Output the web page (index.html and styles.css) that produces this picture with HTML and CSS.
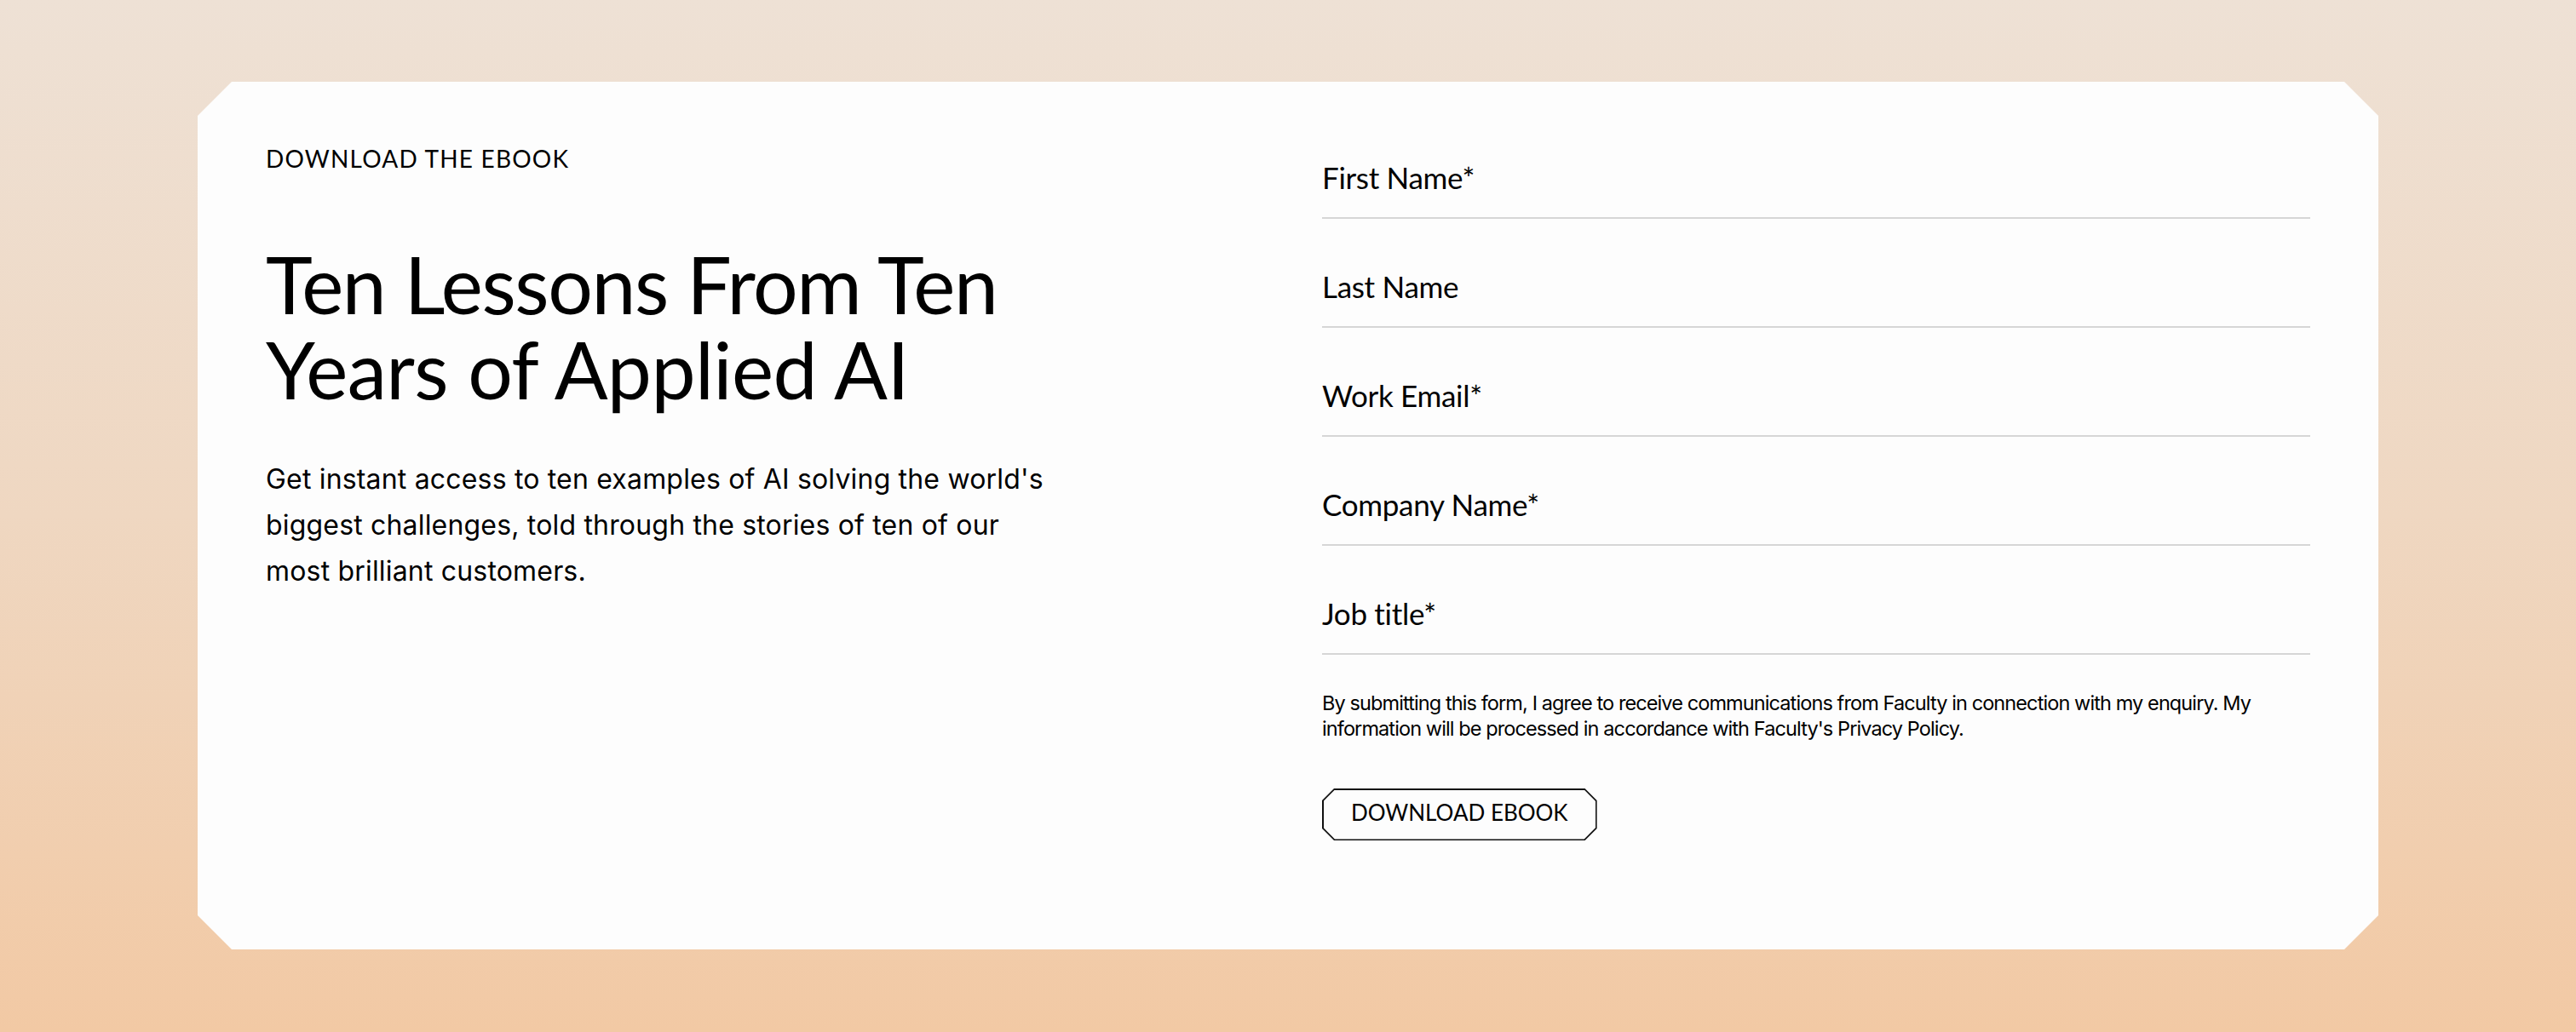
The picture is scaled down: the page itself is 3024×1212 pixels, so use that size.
FILE: index.html
```html
<!DOCTYPE html>
<html lang="en">
<head>
<meta charset="utf-8">
<title>Download the ebook</title>
<link rel="stylesheet" href="styles.css">
</head>
<body>
<main class="page">
  <section class="card">
    <div class="intro">
      <p class="eyebrow">DOWNLOAD THE EBOOK</p>
      <h1 class="title"><span class="title-line">Ten Lessons From Ten</span><span class="title-line">Years of Applied AI</span></h1>
      <p class="lead">Get instant access to ten examples of AI solving the world's biggest challenges, told through the stories of ten of our most brilliant customers.</p>
    </div>
    <form class="form" onsubmit="return false;">
      <div class="fields">
        <label class="field"><span class="field-label">First Name*</span></label>
        <label class="field"><span class="field-label">Last Name</span></label>
        <label class="field"><span class="field-label">Work Email*</span></label>
        <label class="field"><span class="field-label">Company Name*</span></label>
        <label class="field"><span class="field-label">Job title*</span></label>
      </div>
      <p class="consent">By submitting this form, I agree to receive communications from Faculty in connection with my enquiry. My information will be processed in accordance with Faculty's Privacy Policy.</p>
      <button class="submit" type="submit"><span class="submit-text">DOWNLOAD EBOOK</span></button>
    </form>
  </section>
</main>
</body>
</html>
```
FILE: styles.css
```css
* { box-sizing: border-box; }
html, body { margin: 0; padding: 0; }
body {
  background: linear-gradient(180deg, #eee1d5 0%, #efd7c1 50%, #f2c9a4 100%);
  min-height: 1212px;
  color: #000;
}
.page {
  padding: 96px 232px 97px;
}
.card {
  background: #fdfdfd;
  clip-path: polygon(40px 0, calc(100% - 40px) 0, 100% 40px, 100% calc(100% - 40px), calc(100% - 40px) 100%, 40px 100%, 0 calc(100% - 40px), 0 40px);
  padding: 73px 80px 128px;
  display: grid;
  grid-template-columns: 1160px 1160px;
  column-gap: 80px;
  align-items: start;
}
.intro { display: flex; flex-direction: column; }
.eyebrow {
  margin: 0;
  font-family: Lato, "Open Sans", sans-serif;
  font-size: 28px;
  line-height: 34px;
  letter-spacing: 1.2px;
}
.title {
  margin: 80px 0 0;
  font-family: Lato, "Open Sans", sans-serif;
  font-weight: 400;
  font-size: 93px;
  line-height: 100px;
  display: flex;
  flex-direction: column;
}
.title-line { display: block; height: 100px; }
.title-line:first-child { letter-spacing: -1.4px; }
.title-line:last-child { letter-spacing: -0.6px; }
.lead {
  margin: 53px 0 0;
  max-width: 925px;
  font-family: Inter, Roboto, sans-serif;
  font-size: 32px;
  line-height: 54px;
  letter-spacing: 0.18px;
}
.form { display: flex; flex-direction: column; align-items: flex-start; }
.fields { display: flex; flex-direction: column; gap: 40px; width: 100%; }
.field {
  display: block;
  padding: 18px 0 26px;
  border-bottom: 2px solid #d6d6d6;
}
.field-label {
  display: block;
  font-family: Lato, "Open Sans", sans-serif;
  font-size: 35px;
  line-height: 42px;
  letter-spacing: -0.3px;
}
.consent {
  margin: 42px 0 0;
  font-family: Inter, Roboto, sans-serif;
  font-size: 23.5px;
  line-height: 30px;
  letter-spacing: -0.9px;
}
.submit {
  position: relative;
  margin-top: 55px;
  height: 61px;
  padding: 0 34px 5px;
  border: 0;
  background: #111;
  clip-path: polygon(14px 0, calc(100% - 14px) 0, 100% 14px, 100% calc(100% - 14px), calc(100% - 14px) 100%, 14px 100%, 0 calc(100% - 14px), 0 14px);
  display: flex;
  align-items: center;
  cursor: pointer;
}
.submit::before {
  content: "";
  position: absolute;
  inset: 1.5px;
  background: #fdfdfd;
  clip-path: polygon(13.4px 0, calc(100% - 13.4px) 0, 100% 13.4px, 100% calc(100% - 13.4px), calc(100% - 13.4px) 100%, 13.4px 100%, 0 calc(100% - 13.4px), 0 13.4px);
}
.submit-text {
  position: relative;
  font-family: Lato, "Open Sans", sans-serif;
  font-size: 26px;
  line-height: 31px;
  color: #000;
}
```
